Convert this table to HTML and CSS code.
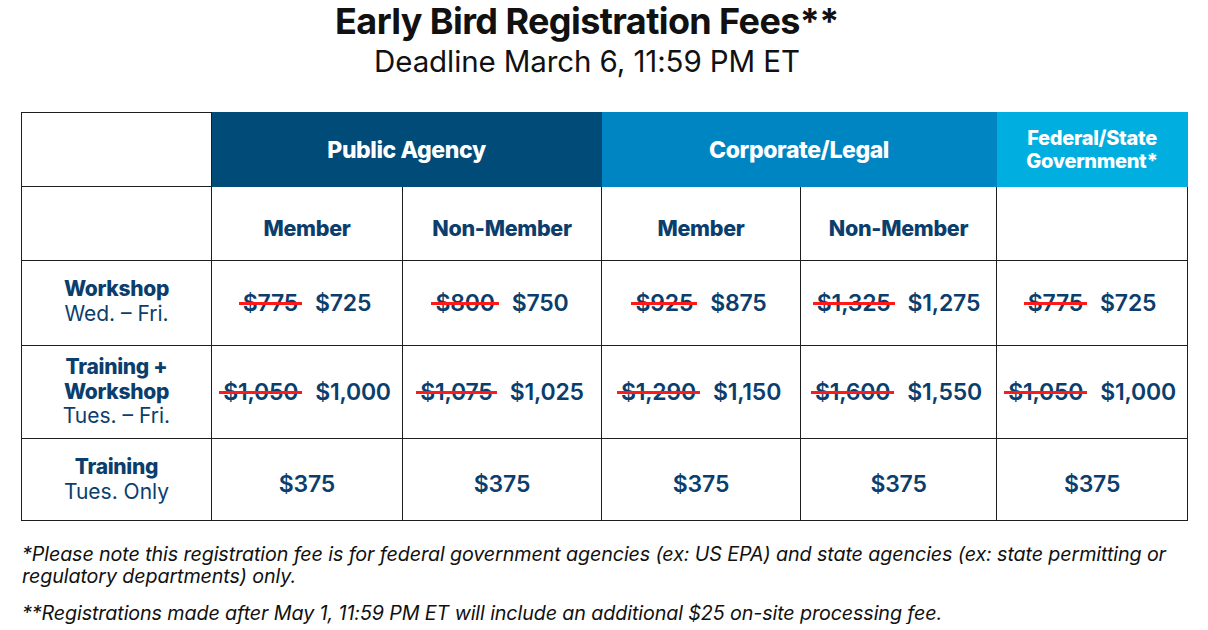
FILE: index.html
```html
<!DOCTYPE html>
<html lang="en">
<head>
<meta charset="utf-8">
<title>Early Bird Registration Fees</title>
<link rel="stylesheet" href="styles.css">
</head>
<body>
<div class="page">
  <h1 class="title">Early Bird Registration Fees**</h1>
  <p class="subtitle">Deadline March 6, 11:59 PM ET</p>
  <table class="fees">
    <colgroup>
      <col class="c0"><col class="c1"><col class="c2"><col class="c3"><col class="c4"><col class="c5">
    </colgroup>
    <tr class="r-head">
      <td class="blank"></td>
      <th colspan="2" class="h-public">Public Agency</th>
      <th colspan="2" class="h-corp">Corporate/Legal</th>
      <th class="h-fed">Federal/State<br>Government*</th>
    </tr>
    <tr class="r-sub">
      <td></td>
      <td class="sub">Member</td>
      <td class="sub">Non-Member</td>
      <td class="sub">Member</td>
      <td class="sub">Non-Member</td>
      <td></td>
    </tr>
    <tr class="r-1">
      <td class="label"><b>Workshop</b><br>Wed. – Fri.</td>
      <td class="price"><span class="old">$775</span><span class="new">$725</span></td>
      <td class="price"><span class="old">$800</span><span class="new">$750</span></td>
      <td class="price"><span class="old">$925</span><span class="new">$875</span></td>
      <td class="price"><span class="old">$1,325</span><span class="new">$1,275</span></td>
      <td class="price"><span class="old">$775</span><span class="new">$725</span></td>
    </tr>
    <tr class="r-2">
      <td class="label"><b>Training +<br>Workshop</b><br>Tues. – Fri.</td>
      <td class="price"><span class="old">$1,050</span><span class="new">$1,000</span></td>
      <td class="price"><span class="old">$1,075</span><span class="new">$1,025</span></td>
      <td class="price"><span class="old">$1,290</span><span class="new">$1,150</span></td>
      <td class="price"><span class="old">$1,600</span><span class="new">$1,550</span></td>
      <td class="price"><span class="old">$1,050</span><span class="new">$1,000</span></td>
    </tr>
    <tr class="r-3">
      <td class="label"><b>Training</b><br>Tues. Only</td>
      <td class="price p3"><span class="new">$375</span></td>
      <td class="price p3"><span class="new">$375</span></td>
      <td class="price p3"><span class="new">$375</span></td>
      <td class="price p3"><span class="new">$375</span></td>
      <td class="price p3"><span class="new">$375</span></td>
    </tr>
  </table>
  <p class="note">*Please note this registration fee is for federal government agencies (ex: US EPA) and state agencies (ex: state permitting or regulatory departments) only.</p>
  <p class="note note2">**Registrations made after May 1, 11:59 PM ET will include an additional $25 on-site processing fee.</p>
</div>
</body>
</html>
```

FILE: styles.css
```css
html, body {
  margin: 0;
  padding: 0;
  background: #ffffff;
}
body {
  font-family: Inter, "Noto Sans", sans-serif;
  color: #111111;
}
.page {
  padding: 0 21px;
}
.title {
  margin: 0;
  padding-right: 34px;
  font-size: 36px;
  line-height: 43px;
  font-weight: 700;
  letter-spacing: -0.6px;
  text-align: center;
  color: #111;
}
.subtitle {
  margin: 0;
  padding-right: 34px;
  font-size: 29.5px;
  line-height: 36px;
  font-weight: 400;
  letter-spacing: -0.1px;
  text-align: center;
  color: #111;
}
.fees {
  margin-top: 33px;
  width: 1166px;
  border-collapse: collapse;
  table-layout: fixed;
}
.c0 { width: 190px; }
.c1 { width: 191px; }
.c2 { width: 199px; }
.c3 { width: 199px; }
.c4 { width: 196px; }
.c5 { width: 191px; }
.fees td, .fees th {
  border: 1px solid #1e1e1e;
  padding: 0;
  text-align: center;
  vertical-align: middle;
}
.r-head { height: 74px; }
.r-sub { height: 74px; }
.r-1 { height: 85px; }
.r-2 { height: 93px; }
.r-3 { height: 82px; }
.fees th {
  color: #ffffff;
  font-weight: 800;
  font-size: 23px;
  letter-spacing: -0.4px;
}
.fees .h-public { background: #004b78; border-color: #004b78; }
.fees .h-corp { background: #0085c3; border-color: #0085c3; }
.fees .h-fed {
  background: #00aee0;
  border-color: #00aee0;
  font-size: 20px;
  line-height: 23px;
  letter-spacing: -0.3px;
}
.sub {
  color: #0b3e6c;
  font-weight: 800;
  font-size: 21.5px;
  letter-spacing: -0.3px;
  padding-top: 8px !important;
}
.label {
  color: #0b3e6c;
  font-size: 21px;
  line-height: 24.5px;
  font-weight: 400;
}
.r-1 .label { padding-bottom: 3px; }
.label b {
  font-weight: 800;
  letter-spacing: -0.3px;
}
.price {
  color: #0b3e6c;
  font-size: 23px;
  font-weight: 600;
  letter-spacing: -0.2px;
}
.p3 { padding-top: 8px !important; }
.old {
  position: relative;
  display: inline-block;
  margin-right: 17px;
}
.old::after {
  content: "";
  position: absolute;
  left: -4px;
  right: -4px;
  top: 50%;
  height: 2.5px;
  margin-top: -1px;
  background: #ff1a1a;
}
.new {
  display: inline-block;
}
.note {
  margin: 22px 0 0 1px;
  font-size: 19.7px;
  line-height: 22px;
  font-style: italic;
  color: #111;
  letter-spacing: -0.1px;
}
.note2 {
  margin-top: 15px;
}
```
